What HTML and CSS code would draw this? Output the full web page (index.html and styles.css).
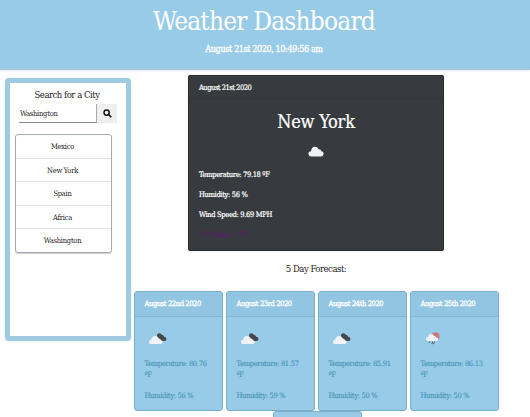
FILE: index.html
```html
<!DOCTYPE html>
<html lang="en">
<head>
<meta charset="utf-8">
<title>Weather Dashboard</title>
<link rel="stylesheet" href="styles.css">
</head>
<body>
<svg width="0" height="0" class="defs">
  <symbol id="cloud" viewBox="0 0 16 11"><path d="M3.5 10.5C1.5 10.5.4 9.3.4 7.8c0-1.6 1.2-2.6 2.6-2.6C3.2 2.5 4.7.7 7 .7c1.9 0 3 1 3.5 2.5 1.7-.1 2.7.9 2.8 2.1 1.4.1 2.3 1.2 2.3 2.5 0 1.6-1.1 2.7-2.6 2.7z" fill="#f0f1f4"/></symbol>
  <symbol id="broken" viewBox="0 0 20 14"><path d="M9 4C9 1.9 10 1.2 11.5 1.3c1.2 0 2 .7 2.4 1.7 1.2 0 2 .6 2.2 1.7 1.4.2 2.3 1.1 2.3 2.3 0 1.3-.8 2-2 2H13z" fill="#46484e"/><path d="M3.3 12C1.8 12 1 11 1 9.900c0-1.300.9-2.200 2.200-2.200C3.400 5.400 4.900 4 6.900 4c1.700 0 2.900.9 3.300 2.400 1.600-.1 2.500.7 2.700 1.800 1.200.1 1.900.9 1.900 1.900 0 1.200-.8 1.900-2 1.900z" fill="#f0f1f4"/></symbol>
  <symbol id="rain" viewBox="0 0 20 16"><circle cx="11.500" cy="5.300" r="4" fill="#c9777b"/><path d="M4 10C2.800 10 2 9.200 2 8.100s.8-2 2-2C4.200 4.200 5.500 3 7.200 3c1.500 0 2.500.8 2.800 2 1.500-.1 2.300.7 2.400 1.600 1.100.1 1.800.8 1.800 1.700 0 1.100-.8 1.700-1.800 1.700z" fill="#f0f1f4"/><path d="M6 10.500l-1 1.500M8.500 10.500v2M10.500 10.500l-1 2.500M7.500 12.500l.5.8" stroke="#56626e" stroke-width="1" fill="none"/></symbol>
</svg>
<header class="banner">
  <h1>Weather Dashboard</h1>
  <p>August 21st 2020, 10:49:56 am</p>
</header>
<div class="page">
  <aside class="sidebar">
    <h2>Search for a City</h2>
    <div class="search">
      <input type="text" value="Washington" aria-label="City">
      <button aria-label="Search"><svg width="9" height="9" viewBox="0 0 9 9"><circle cx="3.600" cy="3.600" r="2.600" fill="none" stroke="#111" stroke-width="1.500"/><path d="M5.500 5.500l2.700 2.700" stroke="#111" stroke-width="1.700"/></svg></button>
    </div>
    <ul class="cities"><li>Mexico</li><li>New York</li><li>Spain</li><li>Africa</li><li>Washington</li></ul>
  </aside>
  <main>
    <section class="today">
      <div class="date">August 21st 2020</div>
      <h2>New York</h2>
      <svg class="now" width="16" height="11"><use href="#cloud"/></svg>
      <p>Temperature: 79.18 ºF</p>
      <p>Humidity: 56 %</p>
      <p>Wind Speed: 9.69 MPH</p>
      <p class="uv">UV Index: 7.77</p>
    </section>
    <h3>5 Day Forecast:</h3>
    <section class="forecast">
      <article class="day"><div class="day-head">August 22nd 2020</div><svg width="20" height="16" viewBox="0 0 20 14"><use href="#broken"/></svg><p>Temperature: 80.76<br>ºF</p><p>Humidity: 56 %</p></article>
      <article class="day"><div class="day-head">August 23rd 2020</div><svg width="20" height="16" viewBox="0 0 20 14"><use href="#broken"/></svg><p>Temperature: 81.57<br>ºF</p><p>Humidity: 59 %</p></article>
      <article class="day"><div class="day-head">August 24th 2020</div><svg width="20" height="16" viewBox="0 0 20 14"><use href="#broken"/></svg><p>Temperature: 85.91<br>ºF</p><p>Humidity: 50 %</p></article>
      <article class="day"><div class="day-head">August 25th 2020</div><svg width="20" height="16"><use href="#rain"/></svg><p>Temperature: 86.13<br>ºF</p><p>Humidity: 50 %</p></article>
      <article class="day last"></article>
    </section>
  </main>
</div>
</body>
</html>
```
FILE: styles.css
```css
* { box-sizing: border-box; }
html { overflow: hidden; }
body { margin: 0; height: 417px; overflow: hidden; background: #fff; color: #222; font-family: "DejaVu Serif Condensed", "DejaVu Serif", serif; font-stretch: condensed; font-size: 7.5px; letter-spacing: -.4px; }
h1, h2, h3, p, ul { margin: 0; padding: 0; font-weight: normal; }
.defs { position: absolute; }
.banner { height: 70px; background: #98cbe8; color: #fff; text-align: center; padding: 4px 2px 0 0; border-bottom: 1px solid #b5c5d3; box-shadow: 0 1px 2px #dce9f5; }
.banner h1 { font-size: 26px; line-height: 34px; letter-spacing: -.8px; }
.banner p { font-size: 9px; line-height: 14px; margin-top: 4px; letter-spacing: -.4px; -webkit-text-stroke: .3px #fff; }
.page { display: flex; height: 347px; overflow: hidden; }
.sidebar { flex: none; width: 126px; height: 263px; margin: 8px 0 0 5px; border: 5px solid #9fcae2; border-radius: 4px; box-shadow: 0 0 2px #c5dfee; }
.sidebar h2 { font-size: 9.5px; line-height: 14px; letter-spacing: -.5px; text-align: center; margin: 5px 2px 0 0; }
.search { display: flex; margin: 2px 0 0 9px; height: 20px; }
.search input { width: 78px; height: 19px; padding: 0 0 0 1px; border: 0; border-right: 1px solid #aaa; border-bottom: 1px solid #888; font: inherit; letter-spacing: -.25px; color: #222; outline: 0; background: #fff; }
.search button { width: 20px; height: 19px; border: 0; padding: 0; background: #efeff0; display: flex; align-items: center; justify-content: center; }
.cities { list-style: none; width: 97px; height: 119px; margin: 10px 0 0 5px; border: 1px solid #a4abb2; border-radius: 3px; box-shadow: 0 1px 1px #ccc; text-align: center; letter-spacing: -.25px; padding-right: 2px; }
.cities li { height: 23.500px; line-height: 23px; margin-right: -2px; padding-right: 2px; border-bottom: 1px solid #dfe3e6; }
.cities li:last-child { border: 0; }
main { flex: none; width: 370px; padding: 5px 0 0; }
.today { width: 256px; height: 176px; margin-left: 57px; background: #373b3f; border: 1px solid #2a2d30; border-radius: 2px; box-shadow: 0 0 1px #999; color: #fff; padding: 0 10px; letter-spacing: -.35px; -webkit-text-stroke: .2px #fff; }
.date { height: 23px; line-height: 24px; margin: 0 -10px; padding: 0 10px; letter-spacing: -.5px; border-bottom: 1px solid #33373a; }
.today h2 { font-size: 18px; line-height: 24px; margin-top: 11px; text-align: center; letter-spacing: -.2px; }
.now { display: block; margin: 12px auto 0; }
.today p { line-height: 12px; margin-bottom: 8px; }
.now + p { margin-top: 12px; }
.today .uv { color: #651174; letter-spacing: -.2px; -webkit-text-stroke: 0; }
h3 { font-size: 9.500px; letter-spacing: -.5px; line-height: 14px; margin-top: 11px; text-align: center; }
.forecast { display: flex; flex-wrap: wrap; justify-content: center; gap: 0 3px; margin-top: 15px; }
.day { width: 89px; height: 120px; border: 1px solid #79afcb; border-radius: 3px; background: #98cbe8; color: #4594b1; padding: 0 10px; -webkit-text-stroke: .1px; }
.day-head { height: 25px; line-height: 24px; margin: 0 -10px; padding: 0 10px; color: #fff; background: #92c5e2; border-bottom: 1px solid #82b6d3; border-radius: 2px 2px 0 0; -webkit-text-stroke: .3px #fff; }
.day svg { display: block; margin: 14px 0 0 3px; }
.day p { line-height: 11px; margin-top: 10px; white-space: nowrap; letter-spacing: -.32px; }
.day svg + p { margin-top: 11px; }
.last { margin-left: 3px; }
```
